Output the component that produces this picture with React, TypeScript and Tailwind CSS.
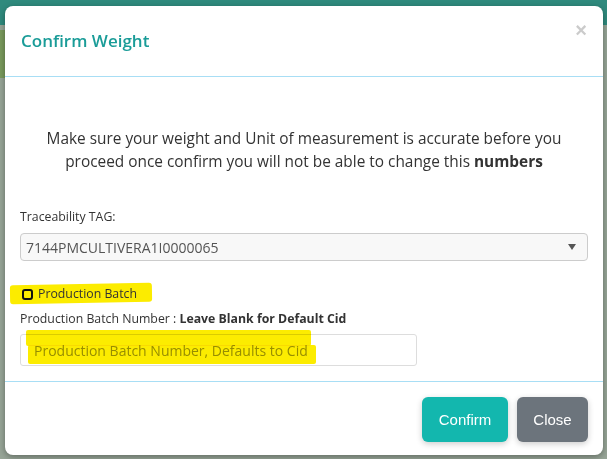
const App = () => {
    return (
        <div className="relative w-[607px] h-[459px] overflow-hidden bg-[#97a597] font-['Open_Sans',sans-serif]">
            {/* dimmed page behind the modal */}
            <div className="h-[25px] bg-[#2f8a7d]" />
            <div className="h-[48px] mt-[5px] w-[40px] bg-[#799a5c]" />

            {/* modal */}
            <div className="absolute left-[5px] top-[6px] w-[598px] h-[449px] bg-white rounded-[8px] shadow-[0_2px_6px_rgba(0,0,0,0.35)] flex flex-col">
                <div className="h-[71px] border-b border-[#a8def5] flex items-start justify-between pl-[16px] pr-[16px]">
                    <h4 className="mt-[24px] text-[17px] leading-[22px] font-semibold text-[#1a9c98]">Confirm Weight</h4>
                    <span className="mt-[13px] text-[20px] leading-[22px] font-bold text-[#cbcbcb] font-['Liberation_Sans',sans-serif]">×</span>
                </div>

                <div className="flex-1 px-[15px] pt-[50px] border-b border-[#a8def5]">
                    <p className="text-center text-[15.4px] leading-[23px] text-[#333]">
                        Make sure your weight and Unit of measurement is accurate before you
                        <br />
                        proceed once confirm you will not be able to change this <b>numbers</b>
                    </p>

                    <div className="mt-[35px] text-[12.3px] leading-[18px] text-[#333]">Traceability TAG:</div>
                    <div className="mt-[7px] h-[28px] border border-[#cccccc] rounded-[4px] bg-[#f8f8f8] flex items-center justify-between pl-[5px] pr-[11px]">
                        <span className="text-[14px] text-[#555]">7144PMCULTIVERA1I0000065</span>
                        <svg width="8" height="6" viewBox="0 0 8 6">
                            <path d="M0 0 H8 L4 6 Z" fill="#555" />
                        </svg>
                    </div>

                    <div className="relative mt-[24px] h-[18px] flex items-center">
                        <div className="absolute left-[-10px] top-[-1px] w-[142px] h-[19px] bg-[#fcec00] rounded-[3px] -rotate-[1deg]" />
                        <div className="relative ml-[2px] w-[11px] h-[11px] border-2 border-[#111] rounded-[3px]" />
                        <span className="relative ml-[5px] text-[12.3px] text-[#333]">Production Batch</span>
                    </div>

                    <div className="mt-[7px] text-[12.3px] leading-[18px] text-[#333]">
                        Production Batch Number : <b>Leave Blank for Default Cid</b>
                    </div>

                    <div className="relative mt-[6px] w-[397px] h-[32px] border border-[#dddddd] rounded-[3px] flex items-center pl-[13px]">
                        <span className="text-[14px] text-[#999]">Production Batch Number, Defaults to Cid</span>
                        <div className="absolute left-[5px] top-[-5px] w-[285px] h-[16px] bg-[#fcec00] mix-blend-multiply rounded-[2px]" />
                        <div className="absolute left-[7px] top-[10px] w-[288px] h-[19px] bg-[#fcec00] mix-blend-multiply rounded-[2px]" />
                    </div>
                </div>

                <div className="h-[73px] flex items-start justify-end gap-[9px] pt-[15px] pr-[15px] font-['Liberation_Sans',sans-serif]">
                    <button className="w-[86px] h-[45px] rounded-[6px] bg-[#13b7ae] text-white text-[15px] pt-[1px] shadow-[0_2px_6px_rgba(0,0,0,0.2)]">Confirm</button>
                    <button className="w-[71px] h-[45px] rounded-[6px] bg-[#6c747c] text-white text-[15px] pt-[1px] shadow-[0_2px_6px_rgba(0,0,0,0.2)]">Close</button>
                </div>
            </div>
        </div>
    );
}

export default App;
